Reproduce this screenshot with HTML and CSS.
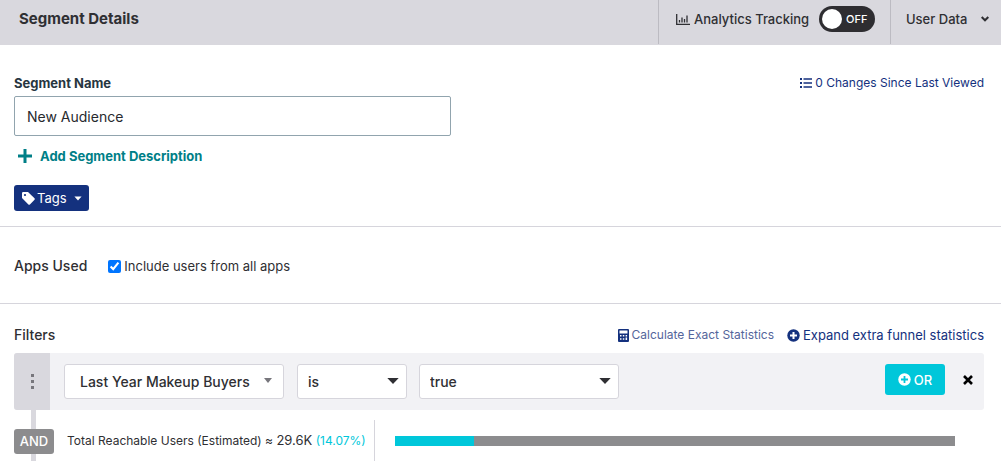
FILE: index.html
```html
<!DOCTYPE html>
<html lang="en">
<head>
<meta charset="utf-8">
<meta name="viewport" content="width=device-width, initial-scale=1">
<title>Segment Details</title>
<link rel="stylesheet" href="styles.css">
</head>
<body>
<header class="topbar">
  <h1 class="topbar-title">Segment Details</h1>
  <label class="topbar-cell tracking">
    <svg class="icon-chart" width="14" height="11" viewBox="0 0 14 11" fill="none" stroke="currentColor" aria-hidden="true"><path d="M.7 0v10.3H14" stroke-width="1.3"/><path d="M3.500 6v2.500M6 3.500v5M8.500 5v3.500M11 1.500v7" stroke-width="1.300"/></svg>
    <span class="tracking-text">Analytics Tracking</span>
    <span class="switch">
      <input class="switch-input" type="checkbox" role="switch">
      <span class="switch-knob"></span>
      <span class="switch-text">OFF</span>
    </span>
  </label>
  <button class="topbar-cell user-data" type="button">User Data
    <svg width="8" height="6" viewBox="0 0 8 6" fill="none" stroke="currentColor" stroke-width="2" aria-hidden="true"><path d="M.7 1 4 4.300 7.300 1"/></svg>
  </button>
</header>

<main>
  <section class="panel details">
    <div class="row">
      <label class="field-label" for="segment-name">Segment Name</label>
      <a class="link changes" href="#"><svg width="12" height="10" viewBox="0 0 12 10" fill="currentColor" aria-hidden="true"><path d="M0 0h2v2H0zM0 4h2v2H0zM0 8h2v2H0zM3.500.2H12v1.600H3.500zM3.500 4.200H12v1.600H3.500zM3.500 8.200H12v1.600H3.500z"/></svg>0 Changes Since Last Viewed</a>
    </div>
    <input class="name-input" id="segment-name" type="text" value="New Audience">
    <button class="add-description" type="button"><svg width="14" height="14" viewBox="0 0 14 14" fill="none" stroke="currentColor" stroke-width="3" aria-hidden="true"><path d="M7 0v14M0 7h14"/></svg>Add Segment Description</button>
    <button class="tags" type="button"><svg width="13" height="13" viewBox="0 0 13 13" fill="currentColor" aria-hidden="true"><path fill-rule="evenodd" d="M0 1.200Q0 0 1.200 0H6l6.500 6.300q.7.800 0 1.500l-4.600 4.700q-.8.700-1.500 0L0 6.100zM3 1.900a1.100 1.100 0 1 0 0 2.200 1.100 1.100 0 0 0 0-2.200z"/></svg><span class="tags-text">Tags</span><svg width="8" height="5" viewBox="0 0 8 5" fill="currentColor" aria-hidden="true"><path d="M.4.5h7.200L4 4.500z"/></svg></button>
  </section>

  <section class="panel apps">
    <h2 class="section-title">Apps Used</h2>
    <label class="check"><input class="check-input" type="checkbox" checked>Include users from all apps</label>
  </section>

  <section class="filters">
    <div class="row filters-head">
      <h2 class="section-title">Filters</h2>
      <div class="stat-links">
        <a class="link calculate" href="#"><svg class="icon-calc" width="11" height="13" viewBox="0 0 11 13" fill="currentColor" aria-hidden="true"><path fill-rule="evenodd" d="M1 0h9q1 0 1 1v11q0 1-1 1H1q-1 0-1-1V1q0-1 1-1zM1.500 1.500V4.500h8V1.500zM2 6v1.500h1.500V6zM4.800 6v1.500h1.500V6zM7.600 6v1.500H9.100V6zM2 9.300v1.500h1.500V9.300zM4.800 9.300v1.500h1.500V9.300zM7.600 8.600v2.500h1.500V8.600z"/></svg>Calculate Exact Statistics</a>
        <a class="link expand" href="#"><svg width="13" height="13" viewBox="0 0 13 13" aria-hidden="true"><circle cx="6.500" cy="6.500" r="6.200" fill="currentColor"/><path d="M6.500 3v7M3 6.500h7" stroke="#fff" stroke-width="2"/></svg>Expand extra funnel statistics</a>
      </div>
    </div>

    <div class="filter">
      <button class="handle" type="button" aria-label="Reorder filter"><svg width="3" height="15" viewBox="0 0 3 15" fill="currentColor" aria-hidden="true"><path d="M0 0h3v3H0zM0 6h3v3H0zM0 12h3v3H0z"/></svg></button>
      <div class="filter-body">
        <div class="picker picker-attribute">
          <select class="picker-select" aria-label="Attribute"><option>Last Year Makeup Buyers</option></select>
          <svg class="picker-arrow" width="8" height="5" viewBox="0 0 8 5" fill="currentColor" aria-hidden="true"><path d="M0 0h8L4 5z"/></svg>
        </div>
        <div class="picker picker-operator">
          <select class="picker-select" aria-label="Operator"><option>is</option></select>
          <svg class="picker-arrow" width="12" height="6" viewBox="0 0 12 6" fill="currentColor" aria-hidden="true"><path d="M.3 0h11.400L6 6z"/></svg>
        </div>
        <div class="picker picker-value">
          <select class="picker-select" aria-label="Value"><option>true</option></select>
          <svg class="picker-arrow" width="12" height="6" viewBox="0 0 12 6" fill="currentColor" aria-hidden="true"><path d="M.3 0h11.400L6 6z"/></svg>
        </div>
        <button class="or" type="button"><svg width="13" height="13" viewBox="0 0 13 13" aria-hidden="true"><circle cx="6.500" cy="6.500" r="6.200" fill="currentColor"/><path d="M6.500 3v7M3 6.500h7" stroke="#00c7da" stroke-width="1.800"/></svg>OR</button>
        <button class="remove" type="button" aria-label="Remove filter"><svg width="10" height="10" viewBox="0 0 10 10" fill="none" stroke="currentColor" stroke-width="2.600" aria-hidden="true"><path d="m1 1 8 8M9 1 1 9"/></svg></button>
      </div>
    </div>

    <div class="summary">
      <div class="joiner"><span class="joiner-badge">AND</span></div>
      <p class="reach">Total Reachable Users (Estimated) ≈ <span class="reach-count">29.6K</span> <span class="reach-share">(14.07%)</span></p>
      <div class="meter"><div class="meter-fill" style="width: 14.07%"></div></div>
    </div>
  </section>
</main>
</body>
</html>
```

FILE: styles.css
```css
* {
  box-sizing: border-box;
}

body {
  margin: 0;
  background: #fff;
  color: #2f2f33;
  font: 13px/20px Inter, "Liberation Sans", sans-serif;
}

h1, h2, p {
  margin: 0;
}

button, input, select {
  margin: 0;
  border: 0;
  padding: 0;
  background: none;
  color: inherit;
  font: inherit;
}

svg {
  flex: none;
}

.topbar {
  display: flex;
  height: 45px;
  padding-bottom: 1px;
  background: #d9d8de;
}

.topbar-title {
  flex: 1;
  padding: 9px 19px;
  font-size: 15px;
  font-weight: 700;
  line-height: 20px;
}

.topbar-cell {
  display: flex;
  align-items: center;
  padding: 0 12px 6px 17px;
  border-left: 1px solid #bcbbc2;
  font-weight: 500;
}

.tracking {
  width: 232px;
  padding-right: 15px;
}

.tracking-text {
  flex: 1;
  padding-left: 4px;
}

.switch {
  display: flex;
  align-items: center;
  gap: 4px;
  position: relative;
  width: 56px;
  height: 26px;
  padding: 0 3px;
  border-radius: 13px;
  background: #2e2d31;
  color: #fff;
  font-size: 11px;
}

.switch-input {
  position: absolute;
  inset: 0;
  opacity: 0;
}

.switch-knob {
  width: 20px;
  height: 20px;
  border-radius: 50%;
  background: #fff;
}

.user-data {
  justify-content: space-between;
  width: 111px;
  padding-left: 15px;
}

.panel {
  border-bottom: 1px solid #d6d5dc;
}

.row {
  display: flex;
  align-items: center;
  justify-content: space-between;
}

.details {
  display: flex;
  flex-direction: column;
  align-items: flex-start;
  padding: 28px 17px 15px 14px;
}

.details .row {
  align-self: stretch;
}

.field-label {
  color: #27363f;
  font-weight: 700;
}

.link {
  display: flex;
  align-items: center;
  gap: 3px;
  color: #14317e;
  text-decoration: none;
}

.changes {
  font-size: 12px;
}

.name-input {
  width: 45%;
  height: 40px;
  margin-top: 3px;
  padding: 0 12px;
  border: 1px solid #91a4ae;
  border-radius: 2px;
  color: #27292e;
  font-size: 14px;
}

.add-description {
  display: flex;
  align-items: center;
  gap: 8px;
  margin-top: 10px;
  padding-left: 4px;
  color: #007f87;
  font-weight: 700;
}

.tags {
  display: flex;
  align-items: center;
  height: 26px;
  margin-top: 19px;
  padding: 0 7px 0 8px;
  border-radius: 3px;
  background: #14317e;
  color: #fff;
}

.tags-text {
  padding: 0 7px 0 2px;
}

.apps {
  display: flex;
  align-items: center;
  gap: 21px;
  padding: 29px 14px 27px;
}

.section-title {
  font-size: 14px;
  font-weight: 500;
  line-height: 20px;
}

.check {
  display: flex;
  align-items: center;
  gap: 3px;
}

.check-input {
  width: 13px;
  height: 13px;
  accent-color: #0075ff;
}

.filters {
  padding: 21px 17px 0 14px;
}

.stat-links {
  display: flex;
  gap: 13px;
}

.calculate {
  color: #54659b;
  font-size: 12px;
}

.icon-calc {
  color: #14317e;
}

.filter {
  display: flex;
  min-height: 57px;
  margin-top: 8px;
  border-radius: 3px;
  background: #f2f2f5;
}

.handle {
  width: 36px;
  border-radius: 3px 0 0 3px;
  background: #d9d8de;
  color: #77767c;
  line-height: 0;
}

.filter-body {
  display: flex;
  flex: 1;
  align-items: center;
  padding: 0 11px 0 14px;
}

.picker {
  position: relative;
  height: 35px;
  margin-right: 12px;
}

.picker-select {
  appearance: none;
  width: 100%;
  height: 100%;
  padding-left: 10px;
  border: 1px solid #d6d5dc;
  border-radius: 3px;
  background: #fff;
  font-size: 14px;
  font-weight: 500;
}

.picker-arrow {
  position: absolute;
  top: 14px;
  right: 8px;
  pointer-events: none;
}

.picker-attribute {
  width: 220px;
  margin-right: 13px;
}

.picker-attribute .picker-select {
  padding-left: 15px;
}

.picker-attribute .picker-arrow {
  right: 12px;
  color: #77767c;
}

.picker-operator {
  width: 110px;
}

.picker-value {
  width: 200px;
}

.or {
  display: flex;
  align-items: center;
  justify-content: center;
  gap: 3px;
  width: 60px;
  height: 31px;
  margin-bottom: 4px;
  margin-left: auto;
  border-radius: 3px;
  background: #00c7da;
  color: #fff;
  font-weight: 500;
}

.remove {
  margin: 0 0 4px 18px;
  color: #000;
  line-height: 0;
}

.summary {
  display: flex;
  align-items: stretch;
  padding-right: 29px;
}

.joiner {
  display: flex;
  flex: none;
  align-items: center;
  width: 40px;
  height: 51px;
  padding-top: 11px;
  background: linear-gradient(#d9d8de, #d9d8de) 17px 0 / 5px 100% no-repeat;
}

.joiner-badge {
  width: 40px;
  border-radius: 3px;
  background: #8c8c8e;
  color: #fff;
  font-weight: 500;
  line-height: 25px;
  text-align: center;
}

.reach {
  margin-top: 10px;
  padding: 10px 8px 10px 13px;
  border-right: 1px solid #d6d5dc;
  font-size: 12px;
  white-space: nowrap;
}

.reach-count {
  font-size: 13px;
}

.reach-share {
  color: #00c7da;
}

.meter {
  flex: 1;
  height: 10px;
  margin: 26px 0 0 20px;
  background: #8c8c8e;
}

.meter-fill {
  height: 100%;
  background: #00c7da;
}
```
